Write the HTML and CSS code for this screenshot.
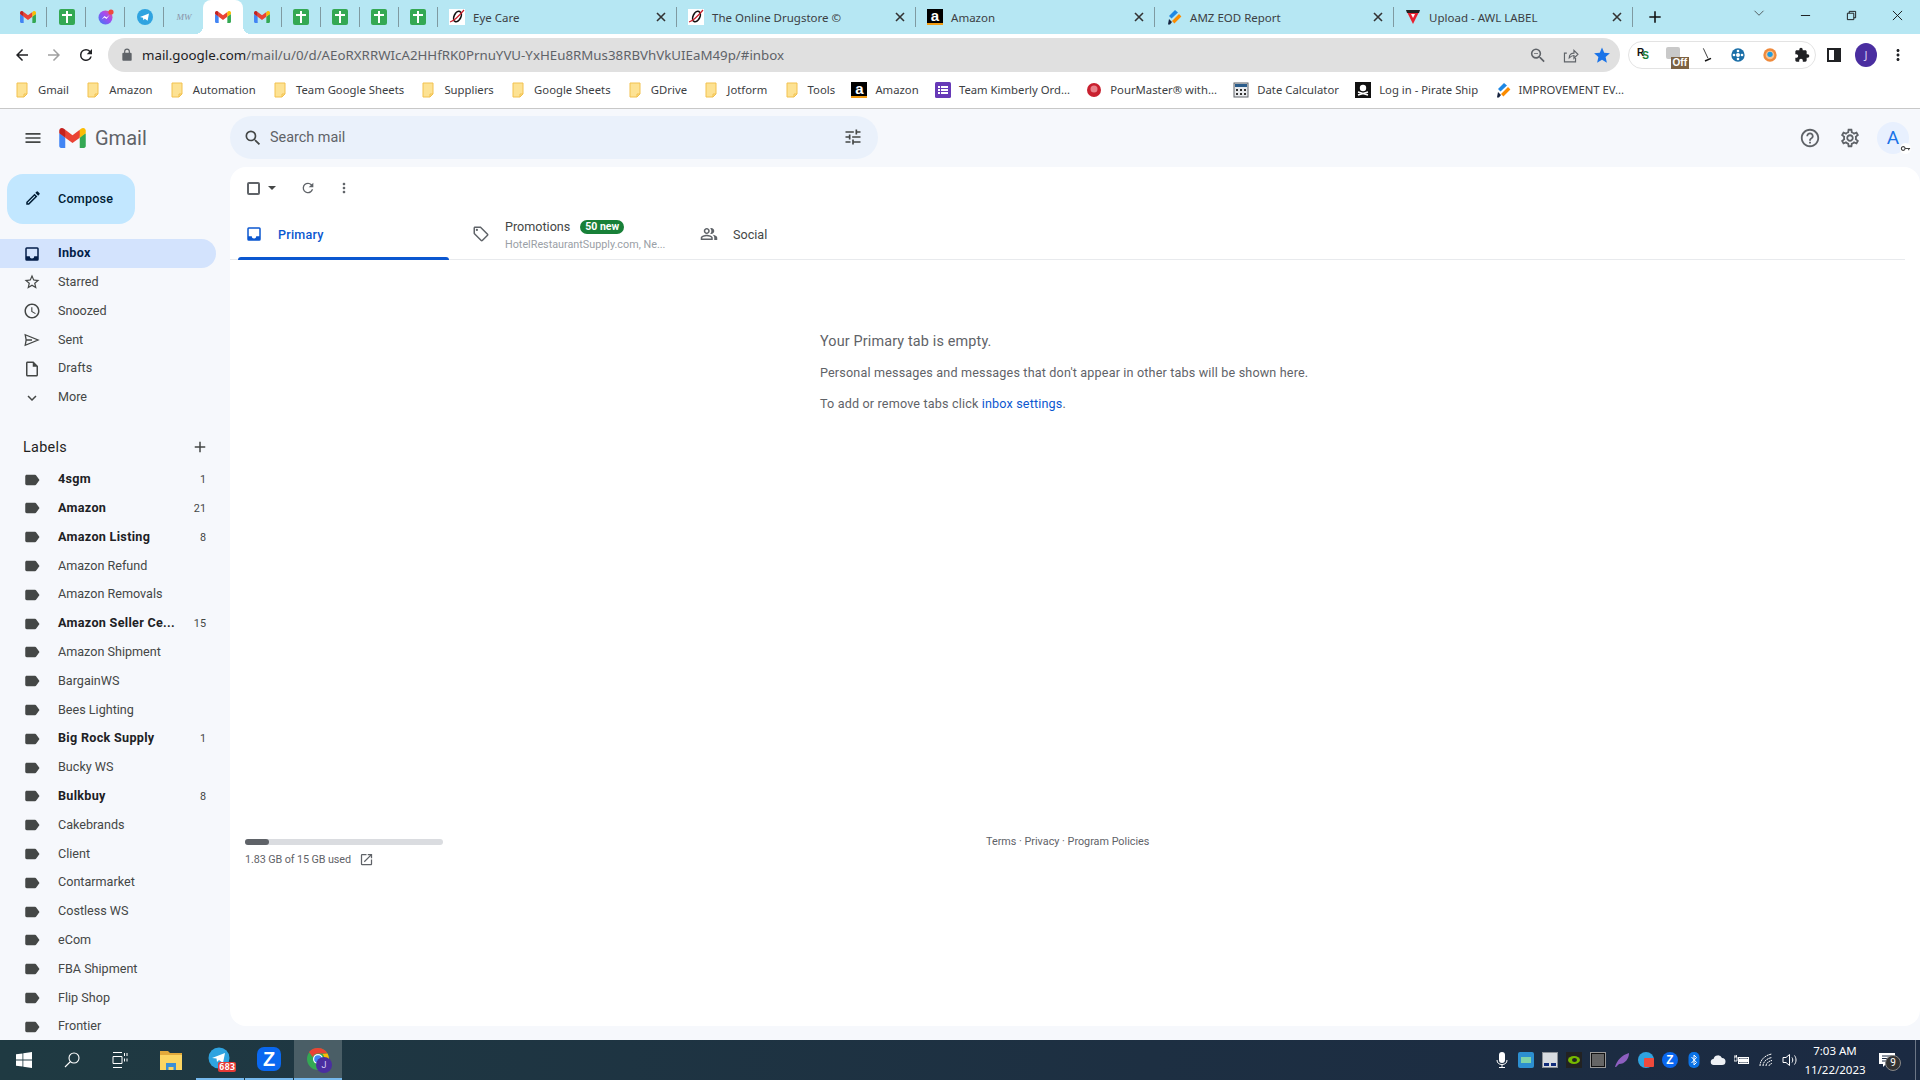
FILE: index.html
```html
<!DOCTYPE html>
<html>
  <head>
    <meta charset="UTF-8" />
    <title>Inbox - Gmail</title>
    <link rel="stylesheet" href="styles.css">
  </head>

  <body>
    <!-- shared icons -->
    <svg class="defs" width="0" height="0">
      <symbol id="i-gmail" viewBox="0 0 256 193">
        <path fill="#4285f4" d="M58.18 192.05V93.14L27.5 65.1 0 49.5v125.1c0 9.65 7.82 17.45 17.45 17.45h40.73z"/>
        <path fill="#34a853" d="M197.82 192.05h40.73c9.65 0 17.45-7.82 17.45-17.45V49.5l-31.16 17.84-27.02 25.8v98.91z"/>
        <path fill="#ea4335" d="M58.18 93.14l-4.17-38.65 4.17-36.99L128 69.87l69.82-52.37 4.67 34.99-4.67 40.65L128 145.5z"/>
        <path fill="#fbbc04" d="M197.82 17.5v75.64L256 49.5V26.18c0-21.6-24.64-33.9-41.89-20.97l-16.29 12.29z"/>
        <path fill="#c5221f" d="M0 49.5l26.76 20.07L58.18 93.14V17.5L41.89 5.21C24.61-7.72 0 4.59 0 26.18V49.5z"/>
      </symbol>
      <symbol id="i-sheet" viewBox="0 0 16 16">
        <rect width="16" height="16" rx="2" fill="#34a853"/>
        <path fill="#fff" d="M7 2h2v3h4v2H9v7H7V7H3V5h4z"/>
      </symbol>
      <symbol id="i-drug" viewBox="0 0 16 16">
        <rect width="16" height="16" fill="#fff"/>
        <ellipse cx="8.5" cy="7.5" rx="3.4" ry="5.6" fill="none" stroke="#111" stroke-width="1.6" transform="rotate(25 8.5 7.5)"/>
        <path d="M1 13C5 12 10 7 15 1" fill="none" stroke="#c8202c" stroke-width="1.2"/>
      </symbol>
      <symbol id="i-amz" viewBox="0 0 16 16">
        <path d="M9 1l3 2.4-6.5 6L3 7z" fill="#1e88e5"/>
        <path d="M13 5l2.4 2.4-7 7L6 12z" fill="#fb8c00"/>
        <path d="M3 10l3 3-2 2.4H2z" fill="#16233f"/>
      </symbol>
      <symbol id="i-folder" viewBox="0 0 16 16">
        <path d="M3 1h10v11l-3 3H3z" fill="#fde293" stroke="#f2c14e" stroke-width="1"/>
        <path d="M10 15v-3h3" fill="none" stroke="#f2c14e"/>
      </symbol>
      <symbol id="i-search" viewBox="0 0 24 24"><path d="M15.5 14h-.79l-.28-.27A6.47 6.47 0 0 0 16 9.5 6.5 6.5 0 1 0 9.5 16c1.61 0 3.09-.59 4.23-1.57l.27.28v.79l5 4.99L20.49 19l-4.99-5zm-6 0C7.01 14 5 11.99 5 9.5S7.01 5 9.5 5 14 7.01 14 9.5 11.99 14 9.5 14z"/></symbol>
      <symbol id="i-refresh" viewBox="0 0 24 24"><path d="M17.65 6.35A7.95 7.95 0 0 0 12 4a8 8 0 1 0 7.73 10h-2.08A6 6 0 1 1 12 6c1.66 0 3.14.69 4.22 1.78L13 11h7V4l-2.35 2.35z"/></symbol>
      <symbol id="i-close" viewBox="0 0 16 16"><path d="M4 4l8 8M12 4l-8 8" fill="none" stroke="currentColor" stroke-width="1.6"/></symbol>
      <symbol id="i-label" viewBox="0 0 24 24"><path d="M17.63 5.84C17.27 5.33 16.67 5 16 5L5 5.01C3.9 5.01 3 5.9 3 7v10c0 1.1.9 1.99 2 1.99L16 19c.67 0 1.27-.33 1.63-.84L22 12l-4.37-6.16z"/></symbol>
      <symbol id="i-inbox" viewBox="0 0 24 24"><path d="M19 3H5a2 2 0 0 0-2 2v14a2 2 0 0 0 2 2h14a2 2 0 0 0 2-2V5a2 2 0 0 0-2-2zm0 12h-4a3 3 0 0 1-6 0H5V5h14v10z"/></symbol>
      <symbol id="i-dots" viewBox="0 0 24 24"><path d="M12 8c1.1 0 2-.9 2-2s-.9-2-2-2-2 .9-2 2 .9 2 2 2zm0 2c-1.1 0-2 .9-2 2s.9 2 2 2 2-.9 2-2-.9-2-2-2zm0 6c-1.1 0-2 .9-2 2s.9 2 2 2 2-.9 2-2-.9-2-2-2z"/></symbol>
    </svg>

    <div class="tabstrip">
      <div class="tab mini"><svg class="fav gm"><use href="#i-gmail"/></svg></div>
      <div class="tab mini"><svg class="fav"><use href="#i-sheet"/></svg></div>
      <div class="tab mini">
        <svg class="fav" viewBox="0 0 16 16">
          <defs><linearGradient id="msg" x1="0" y1="1" x2="1" y2="0"><stop offset="0" stop-color="#3a7bf6"/><stop offset=".6" stop-color="#a44bf0"/><stop offset="1" stop-color="#f5577a"/></linearGradient></defs>
          <circle cx="7.5" cy="8.5" r="7" fill="url(#msg)"/>
          <path d="M3.5 10.5l3-3.5 2 1.5L11.5 6l-3 4-2-1.5z" fill="#fff"/>
          <circle cx="13" cy="3" r="2.6" fill="#ef4a3c"/>
        </svg>
      </div>
      <div class="tab mini">
        <svg class="fav" viewBox="0 0 16 16"><circle cx="8" cy="8" r="8" fill="#2fa3e0"/><path d="M3 8l9-3.6-1.4 7.4-2.8-2-1.4 1.4-.4-2.4z" fill="#fff"/></svg>
      </div>
      <div class="tab mini no-sep"><span class="mw">MW</span></div>
      <div class="tab mini active no-sep"><svg class="fav gm"><use href="#i-gmail"/></svg></div>
      <div class="tab mini"><svg class="fav gm"><use href="#i-gmail"/></svg></div>
      <div class="tab mini"><svg class="fav"><use href="#i-sheet"/></svg></div>
      <div class="tab mini"><svg class="fav"><use href="#i-sheet"/></svg></div>
      <div class="tab mini"><svg class="fav"><use href="#i-sheet"/></svg></div>
      <div class="tab mini"><svg class="fav"><use href="#i-sheet"/></svg></div>
      <div class="tab wide">
        <svg class="fav"><use href="#i-drug"/></svg><span class="tab-title">Eye Care</span>
        <svg class="tab-x"><use href="#i-close"/></svg>
      </div>
      <div class="tab wide">
        <svg class="fav"><use href="#i-drug"/></svg><span class="tab-title">The Online Drugstore ©</span>
        <svg class="tab-x"><use href="#i-close"/></svg>
      </div>
      <div class="tab wide">
        <span class="amazon-fav">a</span><span class="tab-title">Amazon</span>
        <svg class="tab-x"><use href="#i-close"/></svg>
      </div>
      <div class="tab wide">
        <svg class="fav"><use href="#i-amz"/></svg><span class="tab-title">AMZ EOD Report</span>
        <svg class="tab-x"><use href="#i-close"/></svg>
      </div>
      <div class="tab wide">
        <svg class="fav" viewBox="0 0 16 16"><path d="M1 1h14l-1 3H2z" fill="#222"/><path d="M2.5 4h11L8 15z" fill="#e8202f"/><path d="M6 5h4L8 9z" fill="#fff"/></svg>
        <span class="tab-title">Upload - AWL LABEL</span>
        <svg class="tab-x"><use href="#i-close"/></svg>
      </div>
      <svg class="new-tab" viewBox="0 0 16 16"><path d="M8 1.500v13M1.500 8h13" fill="none" stroke="#111" stroke-width="1.800"/></svg>
      <svg class="tab-search" viewBox="0 0 16 16"><path d="M2 5l6 6 6-6" fill="none" stroke="#333" stroke-width="1"/></svg>
      <div class="win-btn"><svg viewBox="0 0 12 12"><path d="M1 6h10" stroke="#111" stroke-width="1"/></svg></div>
      <div class="win-btn"><svg viewBox="0 0 12 12"><path d="M1.500 3.500h7v7h-7zM3.500 3.500v-2h7v7h-2" fill="none" stroke="#111" stroke-width="1"/></svg></div>
      <div class="win-btn"><svg viewBox="0 0 12 12"><path d="M1 1l10 10M11 1L1 11" stroke="#111" stroke-width="1"/></svg></div>
    </div>

    <div class="toolbar">
      <svg class="nav-btn" viewBox="0 0 24 24"><path d="M20 11H7.830l5.590-5.590L12 4l-8 8 8 8 1.410-1.410L7.830 13H20v-2z"/></svg>
      <svg class="nav-btn off" viewBox="0 0 24 24"><path d="M12 4l-1.410 1.410L16.170 11H4v2h12.170l-5.580 5.590L12 20l8-8z"/></svg>
      <svg class="nav-btn"><use href="#i-refresh"/></svg>
      <div class="omnibox">
        <svg class="lock" viewBox="0 0 24 24"><path d="M18 8h-1V6a5 5 0 0 0-10 0v2H6a2 2 0 0 0-2 2v10c0 1.100.9 2 2 2h12a2 2 0 0 0 2-2V10a2 2 0 0 0-2-2zM9 6a3 3 0 0 1 6 0v2H9V6z"/></svg>
        <span class="url"><b>mail.google.com</b>/mail/u/0/d/AEoRXRRWIcA2HHfRK0PrnuYVU-YxHEu8RMus38RBVhVkUIEaM49p/#inbox</span>
        <span class="omni-icons">
          <svg viewBox="0 0 24 24" fill="#5f6368"><path d="M15.500 14h-.79l-.28-.27A6.470 6.470 0 0 0 16 9.500 6.500 6.500 0 1 0 9.500 16c1.610 0 3.090-.59 4.230-1.570l.27.28v.79l5 4.990L20.490 19l-4.990-5zm-6 0C7.010 14 5 11.990 5 9.500S7.010 5 9.500 5 14 7.010 14 9.500 11.990 14 9.500 14zM7 9h5v1H7z"/></svg>
          <svg viewBox="0 0 24 24" fill="none" stroke="#5f6368" stroke-width="1.500"><path d="M19 15v5H5V9h3M11 15c0-4 3-6 6-6V5.500l5 5-5 5V12c-2 0-4 1-6 3z"/></svg>
          <svg viewBox="0 0 24 24" fill="#1a73e8"><path d="M12 17.270L18.180 21l-1.640-7.030L22 9.240l-7.190-.61L12 2 9.190 8.630 2 9.240l5.460 4.730L5.820 21z"/></svg>
        </span>
      </div>
      <div class="ext-pill">
        <span class="ext rs">R<i>S</i></span>
        <span class="ext off"><span class="off-can"></span><span class="off-tag">Off</span></span>
        <svg class="ext" viewBox="0 0 24 24"><path d="M8 2l7 15" stroke="#333" stroke-width="1.400"/><path d="M10 20l9-4 1 2-9 4z" fill="#111"/></svg>
        <svg class="ext" viewBox="0 0 24 24"><circle cx="12" cy="12" r="10" fill="#1b6fa8"/><circle cx="12" cy="12" r="3" fill="#fff"/><circle cx="12" cy="6" r="2" fill="#fff"/><circle cx="12" cy="18" r="2" fill="#fff"/><circle cx="6" cy="12" r="2" fill="#fff"/><circle cx="18" cy="12" r="2" fill="#fff"/></svg>
        <svg class="ext" viewBox="0 0 24 24"><circle cx="12" cy="12" r="10" fill="#ef8a3c"/><circle cx="12" cy="12" r="6.500" fill="#f6c291"/><circle cx="12" cy="11" r="4" fill="#1e9be0"/></svg>
        <svg class="ext" viewBox="0 0 24 24" fill="#202124"><path d="M20.500 11H19V7c0-1.100-.9-2-2-2h-4V3.500a2.500 2.500 0 0 0-5 0V5H4c-1.100 0-1.990.9-1.990 2v3.800H3.500c1.490 0 2.700 1.210 2.700 2.700s-1.210 2.700-2.700 2.700H2V20c0 1.100.9 2 2 2h3.800v-1.500c0-1.490 1.210-2.700 2.700-2.700s2.700 1.210 2.700 2.700V22H17c1.100 0 2-.9 2-2v-4h1.500a2.500 2.500 0 0 0 0-5z"/></svg>
      </div>
      <span class="tb-slot"><span class="side-panel"></span></span>
      <span class="tb-slot"><span class="profile">J</span></span>
      <span class="tb-slot"><svg class="menu-dots"><use href="#i-dots"/></svg></span>
    </div>

    <div class="bookmarks">
      <span class="bm"><svg class="fav"><use href="#i-folder"/></svg>Gmail</span>
      <span class="bm"><svg class="fav"><use href="#i-folder"/></svg>Amazon</span>
      <span class="bm"><svg class="fav"><use href="#i-folder"/></svg>Automation</span>
      <span class="bm"><svg class="fav"><use href="#i-folder"/></svg>Team Google Sheets</span>
      <span class="bm"><svg class="fav"><use href="#i-folder"/></svg>Suppliers</span>
      <span class="bm"><svg class="fav"><use href="#i-folder"/></svg>Google Sheets</span>
      <span class="bm"><svg class="fav"><use href="#i-folder"/></svg>GDrive</span>
      <span class="bm"><svg class="fav"><use href="#i-folder"/></svg>Jotform</span>
      <span class="bm"><svg class="fav"><use href="#i-folder"/></svg>Tools</span>
      <span class="bm"><span class="amazon-fav">a</span>Amazon</span>
      <span class="bm">
        <svg class="fav" viewBox="0 0 16 16"><rect width="16" height="16" rx="1.500" fill="#673ab7"/><path d="M3 4h2v2H3zM6 4h7v2H6zM3 7h2v2H3zM6 7h7v2H6zM3 10h2v2H3zM6 10h7v2H6z" fill="#fff"/></svg>Team Kimberly Ord...
      </span>
      <span class="bm">
        <svg class="fav" viewBox="0 0 16 16"><circle cx="8" cy="8" r="7" fill="#c8202f"/><circle cx="8" cy="7" r="3.500" fill="#e8818a"/></svg>PourMaster® with...
      </span>
      <span class="bm">
        <svg class="fav" viewBox="0 0 16 16"><rect x="1" y="1" width="14" height="14" fill="#e8eaed" stroke="#5f6368"/><path d="M2 2h12v3H2z" fill="#2b5d8c"/><path d="M3 7h2v2H3zM7 7h2v2H7zM11 7h2v2h-2zM3 11h2v2H3zM7 11h2v2H7zM11 11h2v2h-2z" fill="#333"/></svg>Date Calculator
      </span>
      <span class="bm">
        <svg class="fav" viewBox="0 0 16 16"><rect width="16" height="16" fill="#111"/><circle cx="8" cy="6" r="3.200" fill="#fff"/><path d="M3 10l10 3M13 10L3 13" stroke="#fff" stroke-width="1.500"/></svg>Log in - Pirate Ship
      </span>
      <span class="bm"><svg class="fav"><use href="#i-amz"/></svg>IMPROVEMENT EV...</span>
    </div>

    <div class="app">
      <header class="app-head">
        <div class="brand">
          <svg class="burger" viewBox="0 0 24 24"><path d="M3 18h18v-2H3v2zm0-5h18v-2H3v2zm0-7v2h18V6H3z"/></svg>
          <svg class="gmail-logo"><use href="#i-gmail"/></svg>
          <span class="gmail-word">Gmail</span>
        </div>
        <div class="searchbar">
          <svg class="search-ico"><use href="#i-search"/></svg>
          <span class="search-text">Search mail</span>
          <svg class="tune" viewBox="0 0 24 24"><path d="M3 17v2h6v-2H3zM3 5v2h10V5H3zm10 16v-2h8v-2h-8v-2h-2v6h2zM7 9v2H3v2h4v2h2V9H7zm14 4v-2H11v2h10zm-6-4h2V7h4V5h-4V3h-2v6z"/></svg>
        </div>
        <div class="head-right">
          <svg class="head-ico" viewBox="0 0 24 24"><path d="M11 18h2v-2h-2v2zm1-16C6.480 2 2 6.480 2 12s4.480 10 10 10 10-4.480 10-10S17.520 2 12 2zm0 18c-4.410 0-8-3.590-8-8s3.590-8 8-8 8 3.590 8 8-3.590 8-8 8zm0-14c-2.210 0-4 1.790-4 4h2c0-1.100.9-2 2-2s2 .9 2 2c0 2-3 1.750-3 5h2c0-2.250 3-2.500 3-5 0-2.210-1.790-4-4-4z"/></svg>
          <svg class="head-ico" viewBox="0 0 24 24"><path d="M19.430 12.980c.04-.32.07-.64.07-.98 0-.34-.03-.66-.07-.98l2.110-1.650c.19-.15.24-.42.12-.64l-2-3.460c-.09-.16-.26-.25-.44-.25-.06 0-.12.01-.17.03l-2.490 1c-.52-.4-1.080-.73-1.690-.98l-.38-2.650C14.460 2.180 14.250 2 14 2h-4c-.25 0-.46.18-.49.42l-.38 2.650c-.61.25-1.170.59-1.690.98l-2.490-1c-.06-.02-.12-.03-.18-.03-.17 0-.34.09-.43.25l-2 3.460c-.13.22-.07.49.12.64l2.110 1.650c-.04.32-.07.65-.07.98 0 .33.03.66.07.98l-2.110 1.650c-.19.15-.24.42-.12.64l2 3.460c.09.16.26.25.44.25.06 0 .12-.01.17-.03l2.490-1c.52.4 1.080.73 1.690.98l.38 2.650c.03.24.24.42.49.42h4c.25 0 .46-.18.49-.42l.38-2.650c.61-.25 1.170-.59 1.690-.98l2.490 1c.06.02.12.03.18.03.17 0 .34-.09.43-.25l2-3.460c.12-.22.07-.49-.12-.64l-2.110-1.650zm-1.980-1.710c.04.31.05.52.05.73 0 .21-.02.43-.05.73l-.14 1.130.89.7 1.080.84-.7 1.210-1.270-.51-1.040-.42-.9.68c-.43.32-.84.56-1.250.73l-1.060.43-.16 1.130-.2 1.350h-1.400l-.19-1.350-.16-1.130-1.060-.43c-.43-.18-.83-.41-1.230-.71l-.91-.7-1.060.43-1.270.51-.7-1.210 1.080-.84.89-.7-.14-1.130c-.03-.31-.05-.54-.05-.74s.02-.43.05-.73l.14-1.130-.89-.7-1.080-.84.7-1.210 1.270.51 1.040.42.9-.68c.43-.32.84-.56 1.250-.73l1.060-.43.16-1.130.2-1.350h1.390l.19 1.350.16 1.130 1.060.43c.43.18.83.41 1.230.71l.91.7 1.060-.43 1.270-.51.7 1.210-1.070.85-.89.7.14 1.130zM12 8c-2.210 0-4 1.790-4 4s1.790 4 4 4 4-1.790 4-4-1.790-4-4-4zm0 6c-1.100 0-2-.9-2-2s.9-2 2-2 2 .9 2 2-.9 2-2 2z"/></svg>
          <span class="account">A
            <span class="key-badge"><svg viewBox="0 0 12 12"><circle cx="3.500" cy="6" r="2" fill="none" stroke="#444" stroke-width="1.200"/><path d="M5.500 6H11M9.500 6v2" stroke="#444" stroke-width="1.200" fill="none"/></svg></span>
          </span>
        </div>
      </header>

      <div class="app-body">
        <aside class="sidebar">
          <div class="compose">
            <svg class="compose-ico" viewBox="0 0 24 24"><path d="M3 17.250V21h3.750L17.810 9.940l-3.750-3.750L3 17.250zM5.920 19H5v-.92l9.060-9.060.92.92L5.920 19zM20.710 5.630l-2.340-2.340a1 1 0 0 0-1.410 0l-1.830 1.830 3.750 3.750 1.830-1.830a1 1 0 0 0 0-1.410z"/></svg>
            Compose
          </div>

          <nav class="nav">
            <div class="row current"><svg class="row-ico"><use href="#i-inbox"/></svg><span class="row-name">Inbox</span></div>
            <div class="row"><svg class="row-ico" viewBox="0 0 24 24"><path d="M22 9.240l-7.190-.62L12 2 9.190 8.630 2 9.240l5.460 4.730L5.820 21 12 17.270 18.180 21l-1.630-7.030L22 9.240zM12 15.400l-3.760 2.270 1-4.280-3.320-2.880 4.380-.38L12 6.100l1.710 4.040 4.380.38-3.320 2.880 1 4.280L12 15.400z"/></svg><span class="row-name">Starred</span></div>
            <div class="row"><svg class="row-ico" viewBox="0 0 24 24"><path d="M11.990 2C6.470 2 2 6.480 2 12s4.470 10 9.990 10C17.520 22 22 17.520 22 12S17.520 2 11.990 2zM12 20c-4.420 0-8-3.580-8-8s3.580-8 8-8 8 3.580 8 8-3.580 8-8 8zm.5-13H11v6l5.250 3.150.75-1.230-4.500-2.670z"/></svg><span class="row-name">Snoozed</span></div>
            <div class="row"><svg class="row-ico" viewBox="0 0 24 24"><path d="M3 5l17 7-17 7 1.200-7zM4.200 12H12" fill="none" stroke="#444746" stroke-width="1.800"/></svg><span class="row-name">Sent</span></div>
            <div class="row"><svg class="row-ico" viewBox="0 0 24 24"><path d="M14 2H6c-1.100 0-2 .9-2 2v16c0 1.100.9 2 2 2h12c1.100 0 2-.9 2-2V8l-6-6zM6 20V4h7v5h5v11H6z"/></svg><span class="row-name">Drafts</span></div>
            <div class="row"><svg class="row-ico" viewBox="0 0 24 24"><path d="M16.590 8.590L12 13.170 7.410 8.590 6 10l6 6 6-6z"/></svg><span class="row-name">More</span></div>
          </nav>

          <div class="labels-head">
            <span>Labels</span>
            <svg class="labels-add" viewBox="0 0 24 24"><path d="M19 13h-6v6h-2v-6H5v-2h6V5h2v6h6v2z"/></svg>
          </div>

          <div class="row unread"><svg class="row-ico"><use href="#i-label"/></svg><span class="row-name">4sgm</span><span class="count">1</span></div>
          <div class="row unread"><svg class="row-ico"><use href="#i-label"/></svg><span class="row-name">Amazon</span><span class="count">21</span></div>
          <div class="row unread"><svg class="row-ico"><use href="#i-label"/></svg><span class="row-name">Amazon Listing</span><span class="count">8</span></div>
          <div class="row"><svg class="row-ico"><use href="#i-label"/></svg><span class="row-name">Amazon Refund</span></div>
          <div class="row"><svg class="row-ico"><use href="#i-label"/></svg><span class="row-name">Amazon Removals</span></div>
          <div class="row unread"><svg class="row-ico"><use href="#i-label"/></svg><span class="row-name">Amazon Seller Ce...</span><span class="count">15</span></div>
          <div class="row"><svg class="row-ico"><use href="#i-label"/></svg><span class="row-name">Amazon Shipment</span></div>
          <div class="row"><svg class="row-ico"><use href="#i-label"/></svg><span class="row-name">BargainWS</span></div>
          <div class="row"><svg class="row-ico"><use href="#i-label"/></svg><span class="row-name">Bees Lighting</span></div>
          <div class="row unread"><svg class="row-ico"><use href="#i-label"/></svg><span class="row-name">Big Rock Supply</span><span class="count">1</span></div>
          <div class="row"><svg class="row-ico"><use href="#i-label"/></svg><span class="row-name">Bucky WS</span></div>
          <div class="row unread"><svg class="row-ico"><use href="#i-label"/></svg><span class="row-name">Bulkbuy</span><span class="count">8</span></div>
          <div class="row"><svg class="row-ico"><use href="#i-label"/></svg><span class="row-name">Cakebrands</span></div>
          <div class="row"><svg class="row-ico"><use href="#i-label"/></svg><span class="row-name">Client</span></div>
          <div class="row"><svg class="row-ico"><use href="#i-label"/></svg><span class="row-name">Contarmarket</span></div>
          <div class="row"><svg class="row-ico"><use href="#i-label"/></svg><span class="row-name">Costless WS</span></div>
          <div class="row"><svg class="row-ico"><use href="#i-label"/></svg><span class="row-name">eCom</span></div>
          <div class="row"><svg class="row-ico"><use href="#i-label"/></svg><span class="row-name">FBA Shipment</span></div>
          <div class="row"><svg class="row-ico"><use href="#i-label"/></svg><span class="row-name">Flip Shop</span></div>
          <div class="row"><svg class="row-ico"><use href="#i-label"/></svg><span class="row-name">Frontier</span></div>
        </aside>

        <main class="card">
          <div class="card-tools">
            <span class="checkbox"></span>
            <span class="caret"></span>
            <svg class="tool-ico refresh"><use href="#i-refresh"/></svg>
            <svg class="tool-ico dots"><use href="#i-dots"/></svg>
          </div>

          <div class="cat-tabs">
            <div class="cat primary">
              <svg class="cat-ico"><use href="#i-inbox"/></svg>
              <span>Primary</span>
            </div>
            <div class="cat promo">
              <svg class="cat-ico" viewBox="0 0 24 24"><path d="M21.410 11.580l-9-9C12.050 2.220 11.550 2 11 2H4c-1.100 0-2 .9-2 2v7c0 .55.22 1.050.59 1.420l9 9c.36.36.86.58 1.410.58s1.050-.22 1.410-.59l7-7c.37-.36.59-.86.59-1.410s-.23-1.060-.59-1.420zM13 20.010L4 11V4h7v-.01l9 9-7 7.020z"/><circle cx="6.500" cy="6.500" r="1.500"/></svg>
              <div class="promo-text">
                <div class="promo-top">Promotions <span class="new-badge">50 new</span></div>
                <div class="promo-sub">HotelRestaurantSupply.com, Ne...</div>
              </div>
            </div>
            <div class="cat">
              <svg class="cat-ico" viewBox="0 0 24 24"><path d="M16.670 13.130C18.040 14.060 19 15.320 19 17v3h4v-3c0-2.180-3.570-3.470-6.330-3.870zM15 12c2.210 0 4-1.790 4-4s-1.790-4-4-4c-.47 0-.91.1-1.330.24a5.980 5.980 0 0 1 0 7.520c.42.14.86.24 1.330.24zM9 12c2.210 0 4-1.790 4-4s-1.790-4-4-4-4 1.790-4 4 1.790 4 4 4zm0-6c1.100 0 2 .9 2 2s-.9 2-2 2-2-.9-2-2 .9-2 2-2zM9 13c-2.670 0-8 1.340-8 4v3h16v-3c0-2.660-5.330-4-8-4zm6 5H3v-.99C3.200 16.290 6.300 15 9 15s5.800 1.290 6 2v1z"/></svg>
              <span>Social</span>
            </div>
          </div>

          <div class="empty">
            <h2>Your Primary tab is empty.</h2>
            <p>Personal messages and messages that don't appear in other tabs will be shown here.</p>
            <p>To add or remove tabs click <a href="#">inbox settings</a>.</p>
          </div>

          <div class="card-foot">
            <div class="storage">
              <div class="storage-bar"><div class="storage-fill"></div></div>
              <div class="storage-text">1.83 GB of 15 GB used
                <svg class="open-ico" viewBox="0 0 24 24"><path d="M19 19H5V5h7V3H5a2 2 0 0 0-2 2v14a2 2 0 0 0 2 2h14c1.100 0 2-.9 2-2v-7h-2v7zM14 3v2h3.590l-9.830 9.830 1.410 1.410L19 6.410V10h2V3h-7z"/></svg>
              </div>
            </div>
            <div class="foot-links">Terms · Privacy · Program Policies</div>
          </div>
        </main>
      </div>
    </div>

    <footer class="taskbar">
      <span class="task">
        <svg class="task-ico" viewBox="0 0 16 16" fill="#fff"><path d="M0 2.300l6.500-.9v6.200H0zM7.300 1.300L16 0v7.600H7.300zM0 8.400h6.500v6.200L0 13.700zM7.300 8.400H16V16l-8.700-1.200z"/></svg>
      </span>
      <span class="task">
        <svg class="task-ico" viewBox="0 0 16 16" fill="none" stroke="#fff" stroke-width="1.100"><circle cx="10" cy="6" r="5"/><path d="M6.500 9.500L1 15"/></svg>
      </span>
      <span class="task">
        <svg class="task-ico" viewBox="0 0 16 16" fill="none" stroke="#fff" stroke-width="1"><path d="M1 .5h9M1 15.500h9M1 4.500h9v7H1zM12.500 1v3M15 1v3M12.500 6.500v3M15 6.500v3"/></svg>
      </span>
      <span class="task explorer">
        <svg class="task-ico big" viewBox="0 0 24 24"><path d="M1 3h8l2 2h12v3H1z" fill="#e2a93b"/><path d="M1 7h22v15H1z" fill="#fcd562"/><path d="M7 15h10v7h-2.500v-3h-5v3H7z" fill="#3b8fd6"/></svg>
      </span>
      <span class="task on">
        <svg class="task-ico big" viewBox="0 0 24 24"><circle cx="11" cy="11" r="10.500" fill="#2fa3e0"/><path d="M4 11l13-5-2 10-4-3-2 2-.5-3.500z" fill="#fff"/></svg>
        <span class="tg-badge">683</span>
      </span>
      <span class="task on">
        <span class="zalo big">Z</span>
      </span>
      <span class="task on current">
        <svg class="task-ico big" viewBox="0 0 24 24"><circle cx="12" cy="12" r="11" fill="#34a853"/><path d="M12 1a11 11 0 0 1 9.500 5.500H12a5.500 5.500 0 0 0-5.200 3.700L3 5a11 11 0 0 1 9-4z" fill="#ea4335"/><path d="M21.500 6.500A11 11 0 0 1 12 23l4.800-8.200A5.500 5.500 0 0 0 16.500 7z" fill="#fbbc04"/><circle cx="12" cy="12" r="5" fill="#fff"/><circle cx="12" cy="12" r="3.800" fill="#4285f4"/></svg>
        <span class="chrome-badge">J</span>
      </span>

      <div class="tray">
        <span class="tray-item">
          <svg viewBox="0 0 16 16" fill="#fff"><rect x="5" y="0" width="6" height="11" rx="3"/><path d="M3 8c0 3 2 4.500 5 4.500S13 11 13 8M8 12.500V15M5 15.500h6" fill="none" stroke="#fff"/></svg>
        </span>
        <span class="tray-item">
          <svg viewBox="0 0 16 16"><rect width="16" height="16" rx="2" fill="#2c8fd0"/><path d="M3 5h10v6H3z" fill="#7ed3a8"/></svg>
        </span>
        <span class="tray-item">
          <svg viewBox="0 0 16 16"><rect x=".5" y=".5" width="15" height="15" fill="#d7dbe0" stroke="#8a8f96"/><path d="M2 11h5v3H2zM9 11h5v3H9z" fill="#0f2a7a"/></svg>
        </span>
        <span class="tray-item">
          <svg viewBox="0 0 16 16"><rect width="16" height="16" fill="#222"/><ellipse cx="8" cy="8" rx="6" ry="4" fill="#76b900"/><ellipse cx="8.500" cy="8" rx="2.500" ry="2" fill="#222"/></svg>
        </span>
        <span class="tray-item">
          <svg viewBox="0 0 16 16"><rect x=".5" y=".5" width="15" height="15" fill="#111" stroke="#999"/><path d="M2 3h12M2 5h12M2 7h12M2 9h12M2 11h12M2 13h12" stroke="#bbb"/></svg>
        </span>
        <span class="tray-item">
          <svg viewBox="0 0 16 16"><path d="M1 15C3 8 8 3 15 1c0 6-4 11-10 11L2 15z" fill="#8e5fc0"/></svg>
        </span>
        <span class="tray-item">
          <svg viewBox="0 0 16 16"><circle cx="8" cy="8" r="8" fill="#2fa3e0"/><rect x="6" y="6" width="10" height="9" rx="1" fill="#ef4a3c"/></svg>
        </span>
        <span class="tray-item"><span class="zalo small">Z</span></span>
        <span class="tray-item">
          <svg viewBox="0 0 16 16"><rect x="2.500" width="11" height="16" rx="5" fill="#0a72e6"/><path d="M5.500 5l5 5.500L8 13V3l2.500 2.500-5 5.500" fill="none" stroke="#fff"/></svg>
        </span>
        <span class="tray-item">
          <svg viewBox="0 0 16 16"><path d="M4 13a3 3 0 0 1-.5-6A4.500 4.500 0 0 1 12 6a3.500 3.500 0 0 1 0 7z" fill="#eef1f5"/></svg>
        </span>
        <span class="tray-item">
          <svg viewBox="0 0 16 16" fill="none" stroke="#fff"><rect x="4.500" y="5.500" width="10" height="6"/><path d="M5.500 7h8v3h-8z" fill="#fff"/><path d="M0 5h3v4H0zM1 3v2M2.500 3v2" stroke-width=".9"/></svg>
        </span>
        <span class="tray-item">
          <svg viewBox="0 0 16 16" fill="none" stroke="#fff"><path d="M2 14C2 8 7 3 14 2M5 14c0-4 3.500-7.500 9-8.500M8 14c0-2.500 2.500-5 6-5.500M11 14c0-1 1.500-2.500 3-2.500" stroke-dasharray="2 .6"/></svg>
        </span>
        <span class="tray-item">
          <svg viewBox="0 0 16 16" fill="none" stroke="#fff"><path d="M1 5.500h3l3.500-3v11L4 10.500H1zM10 5.500c1 1.500 1 3.500 0 5M12.500 3.500c2 2.500 2 6.500 0 9" /></svg>
        </span>
      </div>
      <div class="clock"><div>7:03 AM</div><div>11/22/2023</div></div>
      <div class="notif">
        <svg viewBox="0 0 16 16" fill="#fff"><path d="M0 1h16v11H7l-3 3v-3H0z"/><path d="M3 4h10M3 6.500h10M3 9h7" stroke="#1b2a42"/></svg>
        <span class="notif-count">9</span>
      </div>
      <span class="show-desktop"></span>
    </footer>
  </body>
</html>
```

FILE: styles.css
```css
* {
  box-sizing: border-box;
}

html,
body {
  margin: 0;
  height: 100%;
}

body {
  width: 1920px;
  height: 1080px;
  overflow: hidden;
  display: flex;
  flex-direction: column;
  font-family: Roboto, "Liberation Sans", sans-serif;
  font-size: 12.6px;
  color: #444746;
  background: #f6f8fc;
}

svg {
  display: block;
  flex: none;
}

.defs {
  position: absolute;
}

.fav {
  width: 16px;
  height: 16px;
}

.fav.gm {
  height: 12px;
}

/* browser chrome */
.tabstrip {
  height: 34px;
  flex: none;
  display: flex;
  align-items: stretch;
  padding-left: 8px;
  background: #b6e7f3;
  font-family: "Noto Sans", sans-serif;
  font-size: 11.5px;
  color: #3c4043;
}

.tab {
  position: relative;
  display: flex;
  align-items: center;
  flex: none;
}

.tab::after {
  content: "";
  position: absolute;
  right: 0;
  top: 7px;
  width: 1px;
  height: 20px;
  background: #7f9aa1;
}

.tab.no-sep::after {
  display: none;
}

.tab.mini {
  width: 39.1px;
  justify-content: center;
}

.tab.wide {
  width: 239px;
  padding: 0 8px 0 11px;
}

.tab.active {
  background: #fff;
  border-radius: 8px 8px 0 0;
}

.tab.active::before,
.tab.active::after {
  content: "";
  display: block;
  position: absolute;
  top: auto;
  bottom: 0;
  width: 8px;
  height: 8px;
  background: radial-gradient(circle at 0 0, transparent 8px, #fff 8px);
}

.tab.active::before {
  left: -8px;
  right: auto;
}

.tab.active::after {
  right: -8px;
  background: radial-gradient(circle at 100% 0, transparent 8px, #fff 8px);
}

.tab-title {
  flex: 1;
  margin-left: 8px;
  white-space: nowrap;
}

.tab-x {
  width: 16px;
  height: 16px;
  color: #333;
}

.mw {
  font: italic 9px "Liberation Serif", serif;
  color: #8a93a8;
}

.amazon-fav {
  width: 16px;
  height: 16px;
  flex: none;
  background: #000;
  color: #fff;
  font: bold 15px/13px "Liberation Sans", sans-serif;
  text-align: center;
  border-bottom: 2px solid #f39c12;
}

.new-tab {
  width: 14px;
  height: 14px;
  margin: 10px 0 0 15px;
}

.tab-search {
  width: 12px;
  height: 12px;
  margin: 7px 17px 0 auto;
}

.win-btn {
  width: 46px;
  display: flex;
  align-items: center;
  justify-content: center;
  padding-bottom: 4px;
}

.win-btn svg {
  width: 11px;
  height: 11px;
}

.toolbar {
  height: 40px;
  flex: none;
  display: flex;
  align-items: center;
  padding: 4px 0 2px 6px;
  background: #fff;
}

.nav-btn {
  width: 32px;
  height: 18px;
  fill: #202124;
}

.nav-btn.off {
  fill: #a0a0a0;
}

.omnibox {
  width: 1512px;
  height: 34px;
  margin-left: 6px;
  display: flex;
  align-items: center;
  padding: 0 2px 0 12px;
  background: #e0e0e0;
  border-radius: 17px;
  font-family: "Noto Sans", sans-serif;
  font-size: 13.3px;
  color: #5f6368;
}

.lock {
  width: 14px;
  height: 14px;
  fill: #5f6368;
  margin-right: 8px;
}

.url b {
  font-weight: 400;
  color: #202124;
}

.omni-icons {
  margin-left: auto;
  display: flex;
}

.omni-icons svg {
  width: 32px;
  height: 19px;
}

.ext-pill {
  width: 188px;
  height: 28px;
  margin-left: 8px;
  display: flex;
  align-items: center;
  gap: 8px;
  padding-left: 1px;
  border: 1px solid #e3e3e3;
  border-radius: 14px;
}

.ext {
  width: 24px;
  height: 16px;
  flex: none;
  position: relative;
}

.ext.rs {
  font: bold 10px/11px "Liberation Sans", sans-serif;
  color: #111;
  text-align: center;
  height: 16px;
  letter-spacing: -2px;
}

.ext.rs i {
  position: relative;
  top: 3px;
  font-style: normal;
  color: #188038;
}

.off-can {
  display: block;
  width: 14px;
  height: 12px;
  margin: 0 0 0 4px;
  background: #c9c9c9;
  border-radius: 2px;
}

.off-tag {
  position: absolute;
  right: -3px;
  bottom: -6px;
  padding: 0 2px;
  background: #7d6243;
  color: #fff;
  font: bold 10px/12px "Liberation Sans", sans-serif;
}

.tb-slot {
  width: 32px;
  display: flex;
  justify-content: center;
  flex: none;
}

.ext-pill + .tb-slot {
  margin-left: 2px;
}

.side-panel {
  width: 14px;
  height: 14px;
  border: 2px solid #202124;
  border-right-width: 7px;
}

.profile {
  width: 22px;
  height: 24px;
  border-radius: 50%;
  background: #4a2ea0;
  color: #d9d0f5;
  font: 11px/24px "Noto Sans", sans-serif;
  text-align: center;
}

.menu-dots {
  width: 18px;
  height: 18px;
  fill: #202124;
}

.bookmarks {
  height: 35px;
  flex: none;
  display: flex;
  align-items: center;
  gap: 16.3px;
  padding: 0 0 3px 14px;
  background: #fff;
  border-bottom: 1px solid #c8c8c8;
  font-family: "Noto Sans", sans-serif;
  font-size: 11.3px;
  color: #3c4043;
}

.bm {
  display: flex;
  align-items: center;
  gap: 8px;
  white-space: nowrap;
}

/* gmail */
.app {
  flex: 1;
  min-height: 0;
  display: flex;
  flex-direction: column;
}

.app-head {
  height: 58px;
  flex: none;
  display: flex;
  align-items: center;
}

.brand {
  width: 230px;
  flex: none;
  display: flex;
  align-items: center;
}

.burger {
  width: 20px;
  height: 20px;
  margin-left: 23px;
  fill: #444746;
}

.gmail-logo {
  width: 27px;
  height: 20px;
  margin-left: 16px;
}

.gmail-word {
  margin-left: 9px;
  font-size: 20px;
  color: #5f6368;
}

.searchbar {
  width: 648px;
  height: 43px;
  display: flex;
  align-items: center;
  padding: 0 15px 0 13px;
  margin-top: -1px;
  background: #eaf1fb;
  border-radius: 22px;
  font-size: 14.4px;
}

.search-ico {
  width: 20px;
  height: 20px;
  fill: #444746;
}

.search-text {
  margin-left: 7px;
  color: #5f6368;
}

.tune {
  width: 20px;
  height: 20px;
  margin-left: auto;
  margin-top: -2px;
  fill: #444746;
}

.head-right {
  flex: 1;
  display: flex;
  align-items: center;
  padding-right: 11px;
}

.head-ico {
  width: 22px;
  height: 22px;
  fill: #5f6368;
  margin-left: 18px;
}

.head-ico:first-child {
  margin-left: auto;
}

.account {
  position: relative;
  width: 32px;
  height: 32px;
  margin-left: 16px;
  border-radius: 50%;
  background: #e8f0fe;
  color: #1a73e8;
  font-size: 19px;
  line-height: 32px;
  text-align: center;
}

.key-badge {
  position: absolute;
  right: -2px;
  bottom: 0;
  width: 11px;
  height: 11px;
  border-radius: 50%;
  background: #fff;
}

.app-body {
  flex: 1;
  min-height: 0;
  display: flex;
}

.sidebar {
  width: 230px;
  flex: none;
  overflow: hidden;
  padding-top: 7px;
}

.compose {
  width: 128px;
  height: 50px;
  margin-left: 7px;
  display: flex;
  align-items: center;
  padding: 0 0 2px 17px;
  background: #c2e7ff;
  border-radius: 16px;
  font-weight: 500;
  letter-spacing: .2px;
  color: #001d35;
}

.compose-ico {
  width: 18px;
  height: 18px;
  margin-right: 16px;
  fill: #001d35;
}

.nav {
  margin-top: 15.3px;
}

.row {
  width: 216px;
  height: 28.8px;
  display: flex;
  align-items: center;
  padding: 0 10px 0 23px;
  border-radius: 0 15px 15px 0;
}

.row-ico {
  width: 18px;
  height: 18px;
  fill: #444746;
  margin-right: 17px;
}

.row-name {
  flex: 1;
  white-space: nowrap;
  position: relative;
  top: -1px;
}

.row.current {
  background: #d3e3fd;
  font-weight: 700;
  letter-spacing: .3px;
  color: #041e49;
}

.row.current .row-ico {
  fill: #041e49;
}

.row.unread {
  font-weight: 700;
  letter-spacing: .3px;
  color: #202124;
}

.count {
  font-size: 10.8px;
  font-weight: 400;
  letter-spacing: 0;
  color: #444746;
}

.labels-head {
  height: 36px;
  margin-top: 17.2px;
  display: flex;
  align-items: center;
  justify-content: space-between;
  width: 209px;
  padding-left: 23px;
  font-size: 14.4px;
  font-weight: 400;
  letter-spacing: .3px;
  color: #1f1f1f;
}

.labels-add {
  width: 18px;
  height: 18px;
  fill: #444746;
}

.card {
  flex: 1;
  margin-bottom: 14px;
  background: #fff;
  border-radius: 16px;
}

.card-tools {
  height: 42px;
  display: flex;
  align-items: center;
  padding-left: 17px;
}

.checkbox {
  width: 13px;
  height: 13px;
  border: 2px solid #5f6368;
  border-radius: 2px;
}

.caret {
  margin-left: 8px;
  border: 4px solid transparent;
  border-top-color: #444746;
  border-bottom: 0;
}

.tool-ico {
  width: 16px;
  height: 16px;
  fill: #5f6368;
}

.refresh {
  margin-left: 24px;
}

.dots {
  margin-left: 20px;
}

.cat-tabs {
  height: 51px;
  width: 1675px;
  display: flex;
  padding-left: 8px;
  border-bottom: 1px solid #e8eaed;
}

.cat {
  position: relative;
  display: flex;
  align-items: center;
  height: 50px;
  color: #444746;
}

.cat-ico {
  width: 18px;
  height: 18px;
  margin-right: 15px;
  fill: #5f6368;
}

.cat.primary {
  width: 211px;
  padding-left: 7px;
  color: #0b57d0;
  font-weight: 500;
  letter-spacing: .2px;
}

.cat.primary .cat-ico {
  fill: #0b57d0;
}

.cat.primary::after {
  content: "";
  position: absolute;
  left: 0;
  right: 0;
  bottom: -1px;
  height: 3px;
  background: #0b57d0;
  border-radius: 3px 3px 0 0;
}

.cat.promo {
  width: 228px;
  margin-left: 23px;
}

.promo-text {
  margin-top: 1px;
}

.promo-top {
  display: flex;
  align-items: center;
  gap: 10px;
  height: 17px;
}

.new-badge {
  height: 14px;
  padding: 0 5px;
  border-radius: 7px;
  background: #188038;
  color: #fff;
  font-size: 10.5px;
  font-weight: 700;
  line-height: 14px;
}

.promo-sub {
  margin-top: 3px;
  font-size: 10.8px;
  color: #9aa0a6;
}

.empty {
  margin: 73px 0 0 590px;
  color: #5f6368;
}

.empty h2 {
  margin: 0;
  font-size: 14.4px;
  font-weight: 400;
  line-height: 18px;
  letter-spacing: .15px;
  color: #5f6368;
}

.empty p {
  margin: 13px 0 0;
  line-height: 18px;
  letter-spacing: .16px;
}

.empty a {
  color: #0b57d0;
  text-decoration: none;
}

.card-foot {
  display: flex;
  margin-top: 426px;
  padding-left: 15px;
  font-size: 10.8px;
  color: #5f6368;
}

.storage {
  width: 198px;
}

.storage-bar {
  height: 6px;
  border-radius: 3px;
  background: #dadce0;
}

.storage-fill {
  width: 24px;
  height: 6px;
  border-radius: 3px;
  background: #5f6368;
}

.storage-text {
  display: flex;
  align-items: center;
  gap: 8px;
  margin-top: 7px;
  letter-spacing: -.1px;
}

.open-ico {
  width: 15px;
  height: 15px;
  fill: #5f6368;
}

.foot-links {
  margin: -4px 0 0 543px;
}

/* windows taskbar */
.taskbar {
  height: 40px;
  flex: none;
  display: flex;
  align-items: center;
  background: linear-gradient(90deg, #1f3a42, #1d2f42 60%, #1b2a42);
  color: #fff;
}

.task {
  position: relative;
  width: 48px;
  height: 40px;
  flex: none;
  display: flex;
  align-items: center;
  justify-content: center;
}

.task.explorer {
  margin-left: 3px;
}

.task.on {
  margin-left: 1px;
  border-bottom: 2px solid #76b9ed;
}

.task.current {
  background: #4a5e66;
}

.task-ico {
  width: 16px;
  height: 16px;
}

.task-ico.big {
  width: 24px;
  height: 24px;
}

.tg-badge {
  position: absolute;
  left: 22px;
  bottom: 6px;
  padding: 0 1px;
  background: #e53935;
  border-radius: 2px;
  font: bold 9px/10px "DejaVu Sans Mono", monospace;
}

.zalo {
  display: block;
  background: #0a68f0;
  color: #fff;
  font-family: "Liberation Sans", sans-serif;
  font-weight: 700;
  text-align: center;
}

.zalo.big {
  width: 24px;
  height: 24px;
  border-radius: 7px;
  font-size: 20px;
  line-height: 24px;
}

.zalo.small {
  width: 16px;
  height: 16px;
  border-radius: 50%;
  font-size: 12px;
  line-height: 16px;
}

.chrome-badge {
  position: absolute;
  left: 22px;
  top: 17px;
  width: 16px;
  height: 16px;
  border-radius: 50%;
  background: #4a2ea0;
  color: #d9d0f5;
  font-size: 9px;
  line-height: 16px;
  text-align: center;
}

.tray {
  margin-left: auto;
  display: flex;
}

.tray-item {
  width: 24px;
  display: flex;
  justify-content: center;
}

.tray-item svg {
  width: 16px;
  height: 16px;
}

.clock {
  width: 66px;
  text-align: center;
  font-family: "Noto Sans", sans-serif;
  font-size: 11.5px;
  line-height: 19px;
}

.notif {
  position: relative;
  width: 47px;
  padding-left: 11px;
}

.notif svg {
  width: 16px;
  height: 16px;
}

.notif-count {
  position: absolute;
  left: 17px;
  top: 3px;
  width: 16px;
  height: 16px;
  border-radius: 50%;
  background: #333;
  border: 1px solid #888;
  font-size: 10px;
  line-height: 14px;
  text-align: center;
}

.show-desktop {
  width: 5px;
  height: 40px;
  border-left: 1px solid #6c7686;
}
```
